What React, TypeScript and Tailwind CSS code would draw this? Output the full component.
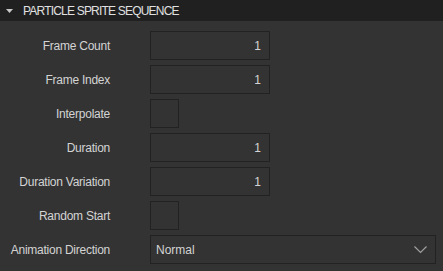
import React from "react";

const font = { fontFamily: '"Liberation Sans", Arial, sans-serif' };

function Label({ text }: { text: string }) {
  return (
    <div className="w-[110px] shrink-0 text-right text-[12px] tracking-[-0.25px] text-[#d4d4d4] leading-none" style={font}>
      {text}
    </div>
  );
}

function NumberRow({ label }: { label: string }) {
  return (
    <div className="flex items-center h-[29px]">
      <Label text={label} />
      <div className="ml-[40px] w-[120px] h-[29px] border border-[#222222] bg-[#333333] flex items-center justify-end pr-[8px] text-[12px] text-[#d4d4d4]" style={font}>
        1
      </div>
    </div>
  );
}

function CheckRow({ label }: { label: string }) {
  return (
    <div className="flex items-center h-[29px]">
      <Label text={label} />
      <div className="ml-[40px] w-[29px] h-[29px] border border-[#222222] bg-[#333333]" />
    </div>
  );
}

export default function App() {
  return (
    <div className="w-[443px] h-[271px] bg-[#333333] overflow-hidden">
      <div className="h-[21px] bg-[#202020] flex items-center">
        <svg width="7" height="4" viewBox="0 0 7 4" className="ml-[6px]">
          <path d="M0 0 L7 0 L3.5 4 Z" fill="#c8c8c8" />
        </svg>
        <span className="ml-[10px] text-[12px] tracking-[-0.8px] text-[#e0e0e0] leading-none" style={font}>
          PARTICLE SPRITE SEQUENCE
        </span>
      </div>
      <div className="flex flex-col gap-[5px] pt-[10px]">
        <NumberRow label="Frame Count" />
        <NumberRow label="Frame Index" />
        <CheckRow label="Interpolate" />
        <NumberRow label="Duration" />
        <NumberRow label="Duration Variation" />
        <CheckRow label="Random Start" />
        <div className="flex items-center h-[29px]">
          <Label text="Animation Direction" />
          <div className="ml-[40px] w-[286px] h-[29px] border border-[#222222] bg-[#333333] flex items-center justify-between pl-[5px] pr-[8px] text-[12px] text-[#d4d4d4]" style={font}>
            <span>Normal</span>
            <svg width="13" height="8" viewBox="0 0 13 8">
              <path d="M0.5 0.5 L6.5 6.5 L12.5 0.5" stroke="#a0a0a0" strokeWidth="1.2" fill="none" />
            </svg>
          </div>
        </div>
      </div>
    </div>
  );
}
